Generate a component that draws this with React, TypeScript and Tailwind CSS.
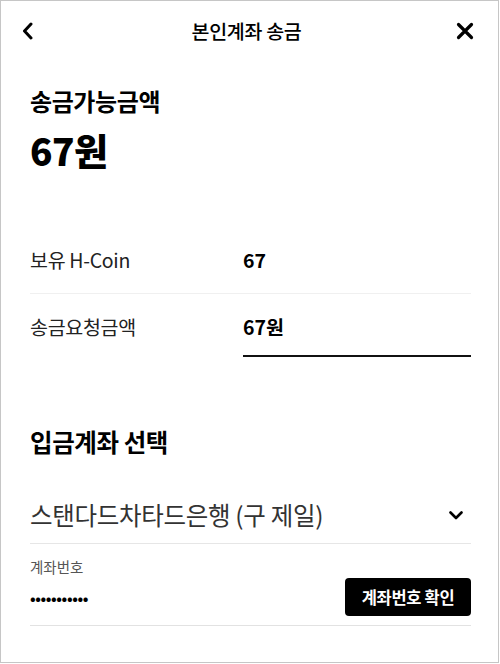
const font = { fontFamily: '"Noto Sans CJK KR", "Noto Sans", sans-serif' }

function BackIcon() {
  return (
    <svg width="14" height="18" viewBox="0 0 14 18" fill="none">
      <path d="M10 2L3.5 9L10 16" stroke="#000" strokeWidth="3" strokeLinecap="round" strokeLinejoin="round" />
    </svg>
  )
}

function CloseIcon() {
  return (
    <svg width="18" height="18" viewBox="0 0 18 18" fill="none">
      <path d="M2.5 2.5L15.5 15.5M15.5 2.5L2.5 15.5" stroke="#000" strokeWidth="3.2" strokeLinecap="round" />
    </svg>
  )
}

function ChevronDown() {
  return (
    <svg width="14" height="9" viewBox="0 0 14 9" fill="none">
      <path d="M1.5 1.5L7 7L12.5 1.5" stroke="#000" strokeWidth="2.6" strokeLinecap="round" strokeLinejoin="round" />
    </svg>
  )
}

export default function App() {
  return (
    <div className="w-[499px] h-[663px] border border-[#c6c6c6] bg-white text-black" style={font}>
      <header className="flex items-center justify-between h-[59px] pl-[20px] pr-[24px]">
        <button className="w-[16px] flex items-center"><BackIcon /></button>
        <h1 className="text-[19.5px] font-medium leading-[28px] tracking-[-0.3px]">본인계좌 송금</h1>
        <button className="flex items-center"><CloseIcon /></button>
      </header>

      <section className="px-[29px] pt-[25px]">
        <p className="text-[24px] font-semibold leading-[32px] tracking-[-0.4px]">송금가능금액</p>
        <p className="mt-[11px] text-[37px] font-black leading-[44px] tracking-[-0.5px]">67원</p>
      </section>

      <section className="mt-[55px] pl-[29px] pr-[27px]">
        <div className="flex items-center h-[67px] border-b border-[#f0f0f0]">
          <span className="w-[213px] text-[19.5px] text-[#222] tracking-[-0.3px]">보유 H-Coin</span>
          <span className="text-[19.5px] font-bold">67</span>
        </div>
        <div className="flex items-start pt-[20px]">
          <span className="w-[213px] text-[19.5px] text-[#222] leading-[26px] tracking-[-0.3px]">송금요청금액</span>
          <div className="flex-1 h-[43px] border-b-2 border-[#111]">
            <span className="text-[19.5px] font-bold leading-[26px]">67원</span>
          </div>
        </div>
      </section>

      <section className="mt-[69px] pl-[29px] pr-[27px]">
        <h2 className="text-[24.5px] font-bold leading-[32px] tracking-[-0.4px]">입금계좌 선택</h2>
        <div className="mt-[29px] flex items-center justify-between h-[57px] border-b border-[#e6e6e6] pr-[8px]">
          <span className="text-[24.5px] text-[#333] tracking-[-0.3px]">스탠다드차타드은행 (구 제일)</span>
          <ChevronDown />
        </div>
        <div className="flex items-end justify-between h-[82px] pb-[9px] border-b border-[#e2e2e2]">
          <div className="flex flex-col pb-[10px]">
            <span className="text-[14.5px] text-[#555] leading-[20px]">계좌번호</span>
            <span className="mt-[13px] text-[15px] font-bold leading-[16px] tracking-[-0.4px]">•••••••••••</span>
          </div>
          <button className="w-[126px] h-[38px] rounded-[4px] bg-black text-white text-[16.5px] font-bold tracking-[-0.3px]">
            계좌번호 확인
          </button>
        </div>
      </section>
    </div>
  )
}
